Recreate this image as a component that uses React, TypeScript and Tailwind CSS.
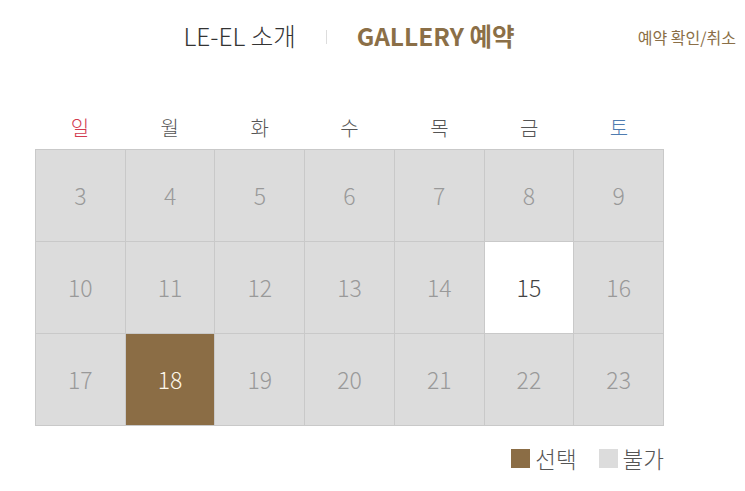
import React from "react";

const FONT = { fontFamily: '"Noto Sans CJK KR", "Noto Sans", sans-serif' };

const days = [
  { label: "일", color: "text-[#d23a4f]" },
  { label: "월", color: "text-[#555]" },
  { label: "화", color: "text-[#555]" },
  { label: "수", color: "text-[#555]" },
  { label: "목", color: "text-[#555]" },
  { label: "금", color: "text-[#555]" },
  { label: "토", color: "text-[#4f7cb0]" },
];

const dates = [3, 4, 5, 6, 7, 8, 9, 10, 11, 12, 13, 14, 15, 16, 17, 18, 19, 20, 21, 22, 23];

function Cell({ n }: { n: number }) {
  if (n === 18) {
    return (
      <div className="flex h-[92px] items-center justify-center border-r border-b border-[#c9c9c9] bg-[#8b6d45] text-[23px] font-light text-[#fdf6e8]">
        {n}
      </div>
    );
  }
  if (n === 15) {
    return (
      <div className="flex h-[92px] items-center justify-center border-r border-b border-[#c9c9c9] bg-white text-[23px] font-light text-[#444]">
        {n}
      </div>
    );
  }
  return (
    <div className="flex h-[92px] items-center justify-center border-r border-b border-[#c9c9c9] bg-[#dcdcdc] text-[23px] font-light text-[#999]">
      {n}
    </div>
  );
}

export default function App() {
  return (
    <div className="h-[491px] w-[745px] bg-white" style={FONT}>
      <div className="flex h-[73px] items-center">
        <div className="ml-[79px] flex w-[540px] shrink-0 items-center justify-center gap-[30px]">
          <span className="text-[24.5px] font-light text-[#333]">LE-EL 소개</span>
          <span className="h-[14px] w-px bg-[#ddd]" />
          <span className="text-[24.5px] font-bold text-[#8b6f47]">GALLERY 예약</span>
        </div>
        <div className="flex-1 whitespace-nowrap pr-[9px] text-right text-[16px] text-[#8b6f47]">예약 확인/취소</div>
      </div>

      <div className="ml-[35px] w-[629px]">
        <div className="grid h-[76px] grid-cols-7 items-end pb-[6px]">
          {days.map((d) => (
            <div key={d.label} className={`text-center text-[20px] font-light ${d.color}`}>
              {d.label}
            </div>
          ))}
        </div>
        <div className="grid grid-cols-7 border-t border-l border-[#c9c9c9]">
          {dates.map((n) => (
            <Cell key={n} n={n} />
          ))}
        </div>
        <div className="mt-[16px] flex items-center justify-end gap-[22px]">
          <div className="flex items-center gap-[5px]">
            <span className="h-[19px] w-[19px] bg-[#8b6d45]" />
            <span className="text-[22.5px] font-light text-[#555]">선택</span>
          </div>
          <div className="flex items-center gap-[5px]">
            <span className="h-[19px] w-[19px] bg-[#dcdcdc]" />
            <span className="text-[22.5px] font-light text-[#555]">불가</span>
          </div>
        </div>
      </div>
    </div>
  );
}
